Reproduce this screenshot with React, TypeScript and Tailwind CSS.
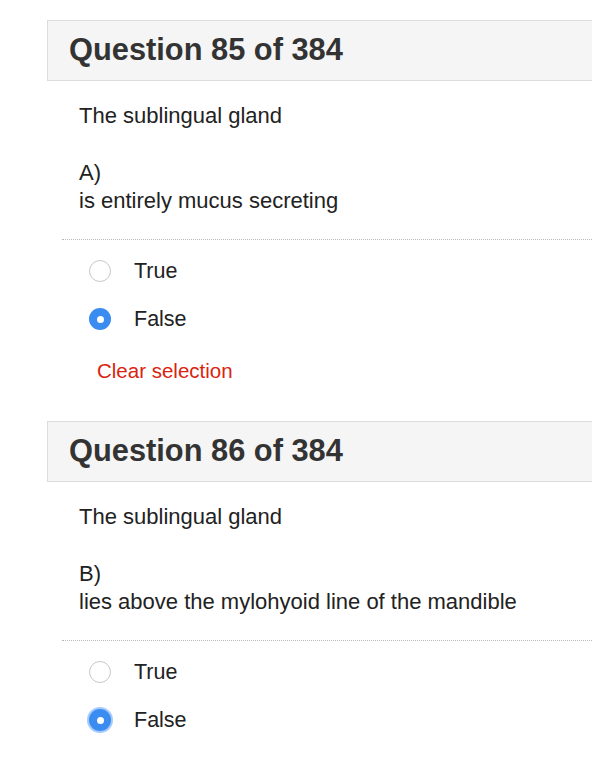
import React from 'react';

type Question = {
  number: number;
  letter: string;
  statement: string;
  answer: 'True' | 'False';
  focused?: boolean;
};

const QUESTIONS: Question[] = [
  { number: 85, letter: 'A)', statement: 'is entirely mucus secreting', answer: 'False' },
  { number: 86, letter: 'B)', statement: 'lies above the mylohyoid line of the mandible', answer: 'False', focused: true },
];

function Radio({ checked, focused }: { checked: boolean; focused?: boolean }) {
  if (!checked) {
    return <span className="w-[22px] h-[22px] rounded-full border-[1.5px] border-[#c8c8c8] bg-white shrink-0" />;
  }
  return (
    <span
      className={`w-[22px] h-[22px] rounded-full bg-[#3b8cf0] flex items-center justify-center shrink-0 ${
        focused ? 'shadow-[0_0_0_2px_rgba(90,160,250,0.55)]' : ''
      }`}
    >
      <span className="w-[7px] h-[7px] rounded-full bg-white" />
    </span>
  );
}

function QuestionBlock({ q, last }: { q: Question; last?: boolean }) {
  return (
    <div>
      <div className="ml-[47px] h-[61px] border border-r-0 border-[#dcdcdc] bg-[#f5f5f5] flex items-center pl-[21px]">
        <h2 className="text-[30.8px] font-bold text-[#333333] leading-none">
          Question {q.number} of 384
        </h2>
      </div>

      <div className="pl-[79px] text-[22px] leading-[28px] text-[#222222]">
        <p className="mt-[21px]">The sublingual gland</p>
        <p className="mt-[29px]">{q.letter}</p>
        <p>{q.statement}</p>
      </div>

      <div className="ml-[62px] mt-[24px] border-t border-dotted border-[#b8b8b8]" />

      <div className="mt-[7px] pl-[89px]">
        {(['True', 'False'] as const).map((opt) => (
          <div key={opt} className="h-[48px] flex items-center gap-[23px]">
            <Radio checked={q.answer === opt} focused={q.focused} />
            <span className="text-[21.5px] text-[#222222]">{opt}</span>
          </div>
        ))}
      </div>

      {!last && (
        <div className="pl-[97px] mt-[14px] mb-[36px] text-[20.5px] leading-[28px] text-[#d8230f]">
          Clear selection
        </div>
      )}
    </div>
  );
}

export default function App() {
  return (
    <div className="w-[592px] h-[762px] overflow-hidden bg-white pt-[20px] font-['Liberation_Sans',Arial,sans-serif]">
      {QUESTIONS.map((q, i) => (
        <QuestionBlock key={q.number} q={q} last={i === QUESTIONS.length - 1} />
      ))}
    </div>
  );
}
